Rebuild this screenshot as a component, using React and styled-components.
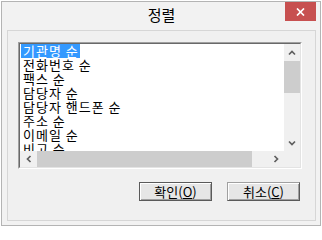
import React from 'react';
import styled, { createGlobalStyle } from 'styled-components';

const GlobalStyle = createGlobalStyle`
  html, body {
    margin: 0;
    padding: 0;
    background: #fff;
  }
  body {
    font-family: "Noto Sans CJK KR", "Liberation Sans", sans-serif;
    color: #000;
  }
`

const Window = styled.div`
    box-sizing: border-box;
    width: 320px;
    height: 225px;
    margin: 1px 0 0 1px;
    border: 1px solid #b4b4b4;
    background: #f2f2f2;
    padding: 0 4px 4px 5px;
    display: flex;
    flex-direction: column;
`

const TitleBar = styled.div`
    height: 28px;
    display: grid;
    grid-template-columns: 1fr auto 1fr;
`

const Title = styled.span`
    grid-column: 2;
    font-size: 15px;
    line-height: 25px;
`

const CloseButton = styled.div`
    grid-column: 3;
    justify-self: end;
    align-self: start;
    width: 31px;
    height: 19px;
    background: #c75050;
    display: flex;
    align-items: center;
    justify-content: center;
`

const Client = styled.div`
    box-sizing: border-box;
    flex: 1;
    border: 1px solid #d6d6d6;
    background: #f0f0f0;
    padding: 11px 0 0 10px;
`

const ListFrame = styled.div`
    box-sizing: border-box;
    width: 284px;
    height: 127px;
    border: 1px solid;
    border-color: #a0a0a0 #fff #fff #a0a0a0;
`

const ListInner = styled.div`
    box-sizing: border-box;
    height: 100%;
    border: 1px solid;
    border-color: #696969 #e3e3e3 #e3e3e3 #696969;
    background: #fff;
    display: grid;
    grid-template-columns: 1fr 16px;
    grid-template-rows: 1fr 16px;
`

const Items = styled.div`
    overflow: hidden;
    min-height: 0;
    padding-left: 1px;
`

const Item = styled.div`
    height: 14px;
    line-height: 14px;
    font-size: 13px;
    letter-spacing: 1px;
    white-space: nowrap;
`

const Label = styled.span`
    display: inline-block;
    height: 14px;
    padding: 0 1px 0 2px;
    background: ${p => p.selected ? '#3399ff' : 'transparent'};
    color: ${p => p.selected ? '#fff' : '#000'};
`

const Scrollbar = styled.div`
    background: #f0f0f0;
    display: flex;
    flex-direction: ${p => p.vertical ? 'column' : 'row'};
    min-height: 0;
    min-width: 0;
`

const Arrow = styled.div`
    flex: none;
    width: ${p => p.vertical ? '16px' : '17px'};
    height: ${p => p.vertical ? '17px' : '16px'};
    display: flex;
    align-items: center;
    justify-content: center;
`

const Thumb = styled.div`
    flex: none;
    background: #cdcdcd;
    width: ${p => p.vertical ? '100%' : p.size + 'px'};
    height: ${p => p.vertical ? p.size + 'px' : '100%'};
`

const Track = styled.div`
    flex: 1;
`

const Corner = styled.div`
    background: #f0f0f0;
`

const ButtonRow = styled.div`
    box-sizing: border-box;
    width: 284px;
    margin-top: 13px;
    padding-right: 2px;
    display: flex;
    justify-content: flex-end;
    gap: 15px;
`

const Button = styled.div`
    box-sizing: border-box;
    width: 73px;
    height: 19px;
    border: 1px solid;
    border-color: ${p => p.primary ? '#5a5a5a' : '#a0a0a0 #5a5a5a #5a5a5a #a0a0a0'};
    box-shadow: inset 1px 1px #fff, inset -1px -1px #a0a0a0;
    background: #e6e6e6;
    display: flex;
    align-items: center;
    justify-content: center;
    font-size: 13px;
    line-height: 1;
`

const Mnemonic = styled.span`
    text-decoration: underline;
    text-underline-offset: 1px;
`

const Chevron = ({ dir }) => {
    const rot = { up: 0, right: 90, down: 180, left: 270 }[dir];
    return (
        <svg width="8" height="8" viewBox="0 0 8 8" style={{ transform: `rotate(${rot}deg)` }}>
            <polyline points="1,5.5 4,2.5 7,5.5" fill="none" stroke="#5f5f5f" strokeWidth="1.7" />
        </svg>
    );
}

const items = [
    '기관명 순',
    '전화번호 순',
    '팩스 순',
    '담당자 순',
    '담당자 핸드폰 순',
    '주소 순',
    '이메일 순',
    '비고 순',
];

export default function App() {
    return (
        <>
            <GlobalStyle />
            <Window>
                <TitleBar>
                    <Title>정렬</Title>
                    <CloseButton>
                        <svg width="9" height="8" viewBox="0 0 9 8">
                            <path d="M1 0.5 L8 7.5 M8 0.5 L1 7.5" stroke="#fff" strokeWidth="1.7" />
                        </svg>
                    </CloseButton>
                </TitleBar>
                <Client>
                    <ListFrame>
                        <ListInner>
                            <Items>
                                {items.map((t, i) => (
                                    <Item key={t}>
                                        <Label selected={i === 0}>{t}</Label>
                                    </Item>
                                ))}
                            </Items>
                            <Scrollbar vertical>
                                <Arrow vertical><Chevron dir="up" /></Arrow>
                                <Thumb vertical size={32} />
                                <Track />
                                <Arrow vertical><Chevron dir="down" /></Arrow>
                            </Scrollbar>
                            <Scrollbar>
                                <Arrow><Chevron dir="left" /></Arrow>
                                <Thumb size={215} />
                                <Track />
                                <Arrow><Chevron dir="right" /></Arrow>
                            </Scrollbar>
                            <Corner />
                        </ListInner>
                    </ListFrame>
                    <ButtonRow>
                        <Button primary>확인(<Mnemonic>O</Mnemonic>)</Button>
                        <Button>취소(<Mnemonic>C</Mnemonic>)</Button>
                    </ButtonRow>
                </Client>
            </Window>
        </>
    );
}
